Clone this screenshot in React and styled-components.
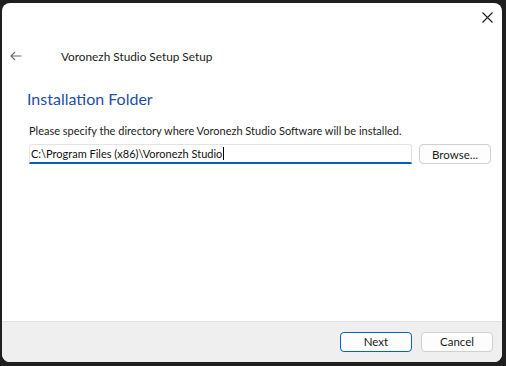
import React from "react";
import styled, { createGlobalStyle } from "styled-components";

const Global = createGlobalStyle`
  html, body { margin: 0; padding: 0; background: #1f1f1f; }
  body { width: 506px; height: 366px; overflow: hidden; font-family: "Lato", "Noto Sans", sans-serif; }
`;

const Screen = styled.div`
  width: 506px;
  height: 366px;
  padding: 3px 4px 4px 2px;
  box-sizing: border-box;
  display: flex;
`;

const Window = styled.div`
  flex: 1;
  background: #ffffff;
  border-radius: 8px;
  overflow: hidden;
  display: flex;
  flex-direction: column;
  position: relative;
`;

const CloseButton = styled.div`
  position: absolute;
  right: 9px;
  top: 8px;
  width: 12px;
  height: 12px;
  display: flex;
  align-items: center;
  justify-content: center;
`;

const Header = styled.div`
  display: flex;
  align-items: center;
  height: 20px;
  margin-top: 43px;
  padding-left: 8px;
`;

const Back = styled.div`
  width: 13px;
  display: flex;
  align-items: center;
`;

const Title = styled.div`
  margin-left: 38px;
  font-size: 11.8px;
  color: #1b1b1b;
`;

const Content = styled.div`
  flex: 1;
  padding: 23px 10px 0 25px;
  display: flex;
  flex-direction: column;
`;

const Heading = styled.div`
  font-size: 16px;
  color: #1f4fa3;
  line-height: 20px;
`;

const Description = styled.div`
  margin-top: 14px;
  margin-left: 2px;
  font-size: 11px;
  color: #1b1b1b;
  line-height: 15px;
`;

const Row = styled.div`
  display: flex;
  align-items: center;
  gap: 7px;
  margin-top: 6px;
  margin-left: 2px;
`;

const Input = styled.div`
  width: 383px;
  height: 20px;
  box-sizing: border-box;
  border: 1px solid #e4e4e4;
  border-bottom: 2px solid #005fb8;
  border-radius: 3px 3px 0 0;
  font-size: 11px;
  color: #111;
  padding-left: 1px;
  display: flex;
  align-items: center;
  white-space: nowrap;
`;

const Caret = styled.span`
  display: inline-block;
  width: 1px;
  height: 13px;
  background: #000;
  margin-left: 1px;
`;

const Button = styled.div`
  width: 72px;
  height: 20px;
  box-sizing: border-box;
  border: 1px solid ${(p) => (p.$primary ? "#0067c0" : "#d0d0d0")};
  border-radius: 4px;
  background: #fdfdfd;
  font-size: 11.5px;
  color: #1b1b1b;
  display: flex;
  align-items: center;
  justify-content: center;
`;

const Footer = styled.div`
  height: 41px;
  box-sizing: border-box;
  background: #efefef;
  border-top: 1px solid #e0e0e0;
  display: flex;
  justify-content: flex-end;
  align-items: center;
  gap: 9px;
  padding: 0 9px 1px 0;
`;

export default function App() {
  return (
    <>
      <Global />
      <Screen>
        <Window>
          <CloseButton>
            <svg width="11" height="11" viewBox="0 0 11 11">
              <path d="M0.5 0.5 L10.5 10.5 M10.5 0.5 L0.5 10.5" stroke="#1b1b1b" strokeWidth="1.1" fill="none" />
            </svg>
          </CloseButton>
          <Header>
            <Back>
              <svg width="12" height="10" viewBox="0 0 12 10">
                <path d="M11.5 5 H1 M5 1 L1 5 L5 9" stroke="#707070" strokeWidth="1.2" fill="none" />
              </svg>
            </Back>
            <Title>Voronezh Studio Setup Setup</Title>
          </Header>
          <Content>
            <Heading>Installation Folder</Heading>
            <Description>Please specify the directory where Voronezh Studio Software will be installed.</Description>
            <Row>
              <Input>
                C:\Program Files (x86)\Voronezh Studio
                <Caret />
              </Input>
              <Button>Browse...</Button>
            </Row>
          </Content>
          <Footer>
            <Button $primary>Next</Button>
            <Button>Cancel</Button>
          </Footer>
        </Window>
      </Screen>
    </>
  );
}
